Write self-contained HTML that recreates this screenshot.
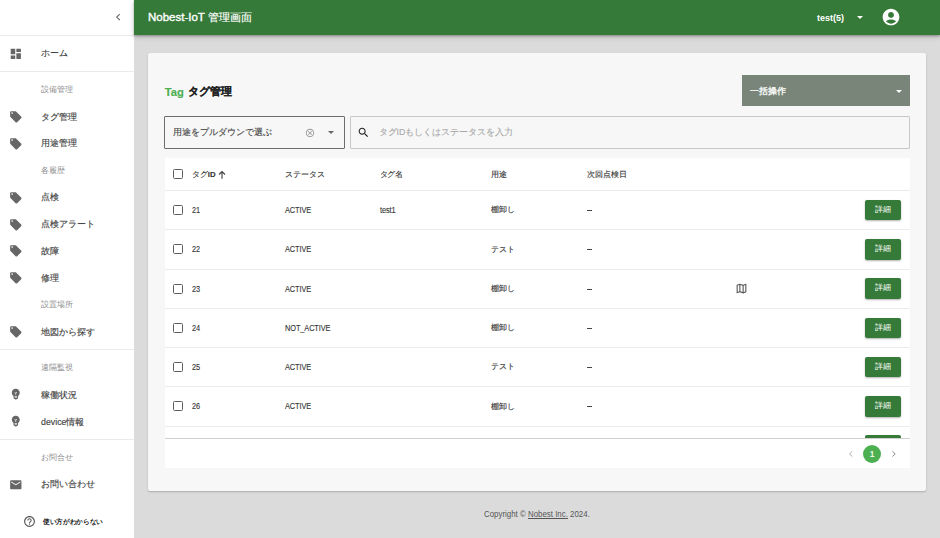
<!DOCTYPE html>
<html><head><meta charset="utf-8">
<style>
*{box-sizing:border-box;margin:0;padding:0}
html,body{width:940px;height:538px;overflow:hidden}
body{position:relative;background:#dbdbdb;font-family:"Liberation Sans",sans-serif;color:#333}
.a{position:absolute;white-space:nowrap}
#side{position:absolute;left:0;top:0;width:134px;height:538px;background:#fff}
.hr{position:absolute;left:0;width:134px;height:1px;background:#eaeaea}
.it{position:absolute;left:41px;font-size:8.8px;line-height:10px;color:#444;-webkit-text-stroke:.15px #444}
.lb{position:absolute;left:41px;font-size:7.5px;line-height:10px;color:#8c8c8c}
.ic{position:absolute;left:9px;width:13.6px;height:13.6px}
#hdr{position:absolute;left:134px;top:0;width:806px;height:35px;background:#367a39;box-shadow:0 1px 2px rgba(0,0,0,.25),0 2px 5px rgba(0,0,0,.2)}
#card{position:absolute;left:148px;top:53px;width:778px;height:437.5px;background:#f7f7f7;border-radius:2px;box-shadow:0 1px 2px rgba(0,0,0,.22)}
#tbl{position:absolute;left:165px;top:158px;width:745px;height:310px;background:#fff}
.rl{position:absolute;left:165px;width:745px;height:1px;background:#ebebeb}
.cb{position:absolute;left:173.1px;width:10.2px;height:10.2px;border:1.5px solid #5e5e5e;border-radius:1.5px}
.td{position:absolute;font-size:7.8px;line-height:10px;color:#333;letter-spacing:-.1px;-webkit-text-stroke:.12px #333}
.lat{font-size:8.4px;transform:scaleX(.88);transform-origin:0 50%}
.btn{position:absolute;left:865px;width:36px;height:20.5px;background:#367a39;border-radius:2px;box-shadow:0 1px 2px rgba(0,0,0,.3);color:#fff;font-size:7.7px;line-height:20.5px;text-align:center}
</style></head><body>
<div id="side">
<svg class="a" style="left:114px;top:12px" width="8" height="10" viewBox="0 0 8 10"><path d="M5.8 2.2 L2.7 5.1 L5.8 8" fill="none" stroke="#6a6a6a" stroke-width="1.1"/></svg>
<div class="hr" style="top:35px"></div>
<svg class="ic" style="top:46.9px" viewBox="0 0 24 24"><path fill="#666" d="M3 13h8V3H3v10zm0 8h8v-6H3v6zm10 0h8V11h-8v10zm0-18v6h8V3h-8z"/></svg>
<div class="it" style="top:48px">ホーム</div>
<div class="hr" style="top:71px"></div>
<div class="lb" style="top:85.0px">設備管理</div>
<svg class="ic" style="top:109.9px" viewBox="0 0 24 24"><path fill="#666" d="M21.41 11.58l-9-9C12.05 2.22 11.55 2 11 2H4c-1.1 0-2 .9-2 2v7c0 .55.22 1.05.59 1.42l9 9c.36.36.86.58 1.41.58.55 0 1.05-.22 1.41-.59l7-7c.37-.36.59-.86.59-1.41 0-.55-.23-1.06-.59-1.42zM5.5 7C4.67 7 4 6.33 4 5.5S4.67 4 5.5 4 7 4.67 7 5.5 6.33 7 5.5 7z"/></svg>
<div class="it" style="top:111.5px">タグ管理</div>
<svg class="ic" style="top:136.6px" viewBox="0 0 24 24"><path fill="#666" d="M21.41 11.58l-9-9C12.05 2.22 11.55 2 11 2H4c-1.1 0-2 .9-2 2v7c0 .55.22 1.05.59 1.42l9 9c.36.36.86.58 1.41.58.55 0 1.05-.22 1.41-.59l7-7c.37-.36.59-.86.59-1.41 0-.55-.23-1.06-.59-1.42zM5.5 7C4.67 7 4 6.33 4 5.5S4.67 4 5.5 4 7 4.67 7 5.5 6.33 7 5.5 7z"/></svg>
<div class="it" style="top:138.2px">用途管理</div>
<div class="lb" style="top:165.8px">各履歴</div>
<svg class="ic" style="top:190.6px" viewBox="0 0 24 24"><path fill="#666" d="M21.41 11.58l-9-9C12.05 2.22 11.55 2 11 2H4c-1.1 0-2 .9-2 2v7c0 .55.22 1.05.59 1.42l9 9c.36.36.86.58 1.41.58.55 0 1.05-.22 1.41-.59l7-7c.37-.36.59-.86.59-1.41 0-.55-.23-1.06-.59-1.42zM5.5 7C4.67 7 4 6.33 4 5.5S4.67 4 5.5 4 7 4.67 7 5.5 6.33 7 5.5 7z"/></svg>
<div class="it" style="top:192.2px">点検</div>
<svg class="ic" style="top:217.6px" viewBox="0 0 24 24"><path fill="#666" d="M21.41 11.58l-9-9C12.05 2.22 11.55 2 11 2H4c-1.1 0-2 .9-2 2v7c0 .55.22 1.05.59 1.42l9 9c.36.36.86.58 1.41.58.55 0 1.05-.22 1.41-.59l7-7c.37-.36.59-.86.59-1.41 0-.55-.23-1.06-.59-1.42zM5.5 7C4.67 7 4 6.33 4 5.5S4.67 4 5.5 4 7 4.67 7 5.5 6.33 7 5.5 7z"/></svg>
<div class="it" style="top:219.2px">点検アラート</div>
<svg class="ic" style="top:244.4px" viewBox="0 0 24 24"><path fill="#666" d="M21.41 11.58l-9-9C12.05 2.22 11.55 2 11 2H4c-1.1 0-2 .9-2 2v7c0 .55.22 1.05.59 1.42l9 9c.36.36.86.58 1.41.58.55 0 1.05-.22 1.41-.59l7-7c.37-.36.59-.86.59-1.41 0-.55-.23-1.06-.59-1.42zM5.5 7C4.67 7 4 6.33 4 5.5S4.67 4 5.5 4 7 4.67 7 5.5 6.33 7 5.5 7z"/></svg>
<div class="it" style="top:246px">故障</div>
<svg class="ic" style="top:271.4px" viewBox="0 0 24 24"><path fill="#666" d="M21.41 11.58l-9-9C12.05 2.22 11.55 2 11 2H4c-1.1 0-2 .9-2 2v7c0 .55.22 1.05.59 1.42l9 9c.36.36.86.58 1.41.58.55 0 1.05-.22 1.41-.59l7-7c.37-.36.59-.86.59-1.41 0-.55-.23-1.06-.59-1.42zM5.5 7C4.67 7 4 6.33 4 5.5S4.67 4 5.5 4 7 4.67 7 5.5 6.33 7 5.5 7z"/></svg>
<div class="it" style="top:273px">修理</div>
<div class="lb" style="top:299.7px">設置場所</div>
<svg class="ic" style="top:324.9px" viewBox="0 0 24 24"><path fill="#666" d="M21.41 11.58l-9-9C12.05 2.22 11.55 2 11 2H4c-1.1 0-2 .9-2 2v7c0 .55.22 1.05.59 1.42l9 9c.36.36.86.58 1.41.58.55 0 1.05-.22 1.41-.59l7-7c.37-.36.59-.86.59-1.41 0-.55-.23-1.06-.59-1.42zM5.5 7C4.67 7 4 6.33 4 5.5S4.67 4 5.5 4 7 4.67 7 5.5 6.33 7 5.5 7z"/></svg>
<div class="it" style="top:326.5px">地図から探す</div>
<div class="hr" style="top:349px"></div>
<div class="lb" style="top:362.5px">遠隔監視</div>
<svg class="ic" style="top:387.09999999999997px" viewBox="0 0 24 24"><path fill="#666" d="M12 3c-.46 0-.93.04-1.4.14-2.76.53-4.96 2.76-5.48 5.52-.48 2.61.48 5.01 2.22 6.56.43.38.66.91.66 1.47V19c0 1.1.9 2 2 2h.28c.35.6.98 1 1.72 1s1.38-.4 1.72-1H14c1.1 0 2-.9 2-2v-2.31c0-.55.22-1.09.64-1.46C18.09 13.95 19 12.08 19 10c0-3.87-3.13-7-7-7zm2 16h-4v-1h4v1zm0-2h-4v-1h4v1zm-1.5-5.59V14h-1v-2.59L9.67 9.590l.71-.71L12 10.5l1.62-1.62.71.71-1.83 1.82z"/></svg>
<div class="it" style="top:389.7px">稼働状況</div>
<svg class="ic" style="top:413.9px" viewBox="0 0 24 24"><path fill="#666" d="M12 3c-.46 0-.93.04-1.4.14-2.76.53-4.96 2.76-5.48 5.52-.48 2.61.48 5.01 2.22 6.56.43.38.66.91.66 1.47V19c0 1.1.9 2 2 2h.28c.35.6.98 1 1.72 1s1.38-.4 1.72-1H14c1.1 0 2-.9 2-2v-2.31c0-.55.22-1.09.64-1.46C18.09 13.95 19 12.08 19 10c0-3.87-3.13-7-7-7zm2 16h-4v-1h4v1zm0-2h-4v-1h4v1zm-1.5-5.59V14h-1v-2.59L9.67 9.590l.71-.71L12 10.5l1.62-1.62.71.71-1.83 1.82z"/></svg>
<div class="it" style="top:416.5px">device情報</div>
<div class="hr" style="top:439px"></div>
<div class="lb" style="top:452.5px">お問合せ</div>
<svg class="ic" style="top:477.7px" viewBox="0 0 24 24"><path fill="#666" d="M20 4H4c-1.1 0-1.99.9-1.99 2L2 18c0 1.1.9 2 2 2h16c1.1 0 2-.9 2-2V6c0-1.1-.9-2-2-2zm0 4l-8 5-8-5V6l8 5 8-5v2z"/></svg>
<div class="it" style="top:479.3px">お問い合わせ</div>
<svg class="a" style="left:23px;top:515px" width="13" height="13" viewBox="0 0 24 24"><path fill="#555" d="M11 18h2v-2h-2v2zm1-16C6.48 2 2 6.480 2 12s4.48 10 10 10 10-4.48 10-10S17.52 2 12 2zm0 18c-4.41 0-8-3.59-8-8s3.59-8 8-8 8 3.59 8 8-3.59 8-8 8zm0-14c-2.210 0-4 1.79-4 4h2c0-1.1.9-2 2-2s2 .9 2 2c0 2-3 1.75-3 5h2c0-2.25 3-2.5 3-5 0-2.21-1.79-4-4-4z"/></svg>
<div class="a" style="left:42.5px;top:516.7px;font-size:6.8px;transform:scaleX(.95);transform-origin:0 50%;line-height:10px;font-weight:bold;color:#222">使い方がわからない</div>
</div>
<div id="hdr">
<div class="a" style="left:14px;top:11.3px;font-size:11.5px;line-height:13px;color:#fff"><span style="-webkit-text-stroke:.35px #fff">Nobest-IoT</span> <span style="font-size:11px;-webkit-text-stroke:.15px #fff">管理画面</span></div>
<div class="a" style="left:683px;top:12.5px;font-size:9px;line-height:11px;color:#fff;font-weight:bold">test(5)</div>
<svg class="a" style="left:722.5px;top:16px" width="6" height="3" viewBox="0 0 6 3"><path d="M0 0h6L3 3z" fill="#fff"/></svg>
<svg class="a" style="left:747px;top:7.3px" width="20" height="20" viewBox="0 0 24 24"><path fill="#fff" d="M12 2C6.48 2 2 6.48 2 12s4.48 10 10 10 10-4.48 10-10S17.52 2 12 2zm0 4c1.93 0 3.5 1.57 3.5 3.5S13.93 13 12 13s-3.5-1.57-3.5-3.5S10.07 6 12 6zm0 14c-2.03 0-4.43-.82-6.14-2.88C7.55 15.8 9.68 15 12 15s4.45.8 6.14 2.12C16.43 19.18 14.03 20 12 20z"/></svg>
</div>
<div id="card"></div>
<div class="a" style="left:164.7px;top:84.6px;font-size:11.2px;line-height:14px;font-weight:bold;color:#4caf50;-webkit-text-stroke:.15px #4caf50">Tag</div>
<div class="a" style="left:187.7px;top:84px;font-size:11px;line-height:14px;font-weight:bold;color:#222;-webkit-text-stroke:.1px #222">タグ管理</div>
<div class="a" style="left:742px;top:75px;width:168px;height:31px;background:#788578"></div>
<div class="a" style="left:750px;top:86.3px;font-size:8.7px;line-height:10px;color:#fff;-webkit-text-stroke:.3px #fff">一括操作</div>
<svg class="a" style="left:896px;top:90px" width="6" height="3" viewBox="0 0 6 3"><path d="M0 0h6L3 3z" fill="#fff"/></svg>
<div class="a" style="left:164px;top:116px;width:180.7px;height:32.5px;border:1.3px solid #6c6c6c;border-radius:1px"></div>
<div class="a" style="left:173px;top:126.6px;font-size:8.8px;line-height:10px;color:#4a4a4a;-webkit-text-stroke:.15px #4a4a4a">用途をプルダウンで選ぶ</div>
<svg class="a" style="left:304.5px;top:127.5px" width="10" height="10" viewBox="0 0 24 24"><path fill="#999" d="M12 2C6.47 2 2 6.47 2 12s4.47 10 10 10 10-4.47 10-10S17.53 2 12 2zm0 18c-4.41 0-8-3.59-8-8s3.59-8 8-8 8 3.59 8 8-3.59 8-8 8zm3.59-13L12 10.590 8.41 7 7 8.41 10.59 12 7 15.59 8.41 17 12 13.41 15.59 17 17 15.59 13.41 12 17 8.41z"/></svg>
<svg class="a" style="left:327.5px;top:130.8px" width="6" height="3" viewBox="0 0 6 3"><path d="M0 0h6L3 3z" fill="#666"/></svg>
<div class="a" style="left:350px;top:115.5px;width:560px;height:33.5px;border:1.2px solid #c8c8c8;border-radius:1px"></div>
<svg class="a" style="left:357px;top:125.6px" width="13" height="13" viewBox="0 0 24 24"><path fill="#222" d="M15.5 14h-.79l-.28-.27C15.41 12.59 16 11.11 16 9.5 16 5.91 13.09 3 9.5 3S3 5.91 3 9.5 5.91 16 9.5 16c1.61 0 3.09-.59 4.23-1.57l.27.28v.79l5 4.99L20.49 19l-4.99-5zm-6 0C7.01 14 5 11.99 5 9.5S7.01 5 9.5 5 14 7.01 14 9.5 11.99 14 9.5 14z"/></svg>
<div class="a" style="left:378.5px;top:126.6px;font-size:8.8px;line-height:10px;color:#a8a8a8;-webkit-text-stroke:.1px #a8a8a8">タグIDもしくはステータスを入力</div>
<div id="tbl"></div>
<div class="rl" style="top:190px"></div>
<div class="cb" style="top:168.7px"></div>
<div class="td" style="left:192px;top:169.8px">タグ<b>ID</b></div>
<svg class="a" style="left:218px;top:170px" width="8" height="9" viewBox="0 0 8 9"><path d="M4 8.8V1.5M1 4.5L4 1.5 7 4.5" fill="none" stroke="#444" stroke-width="1.15"/></svg>
<div class="td" style="left:285px;top:169.8px">ステータス</div>
<div class="td" style="left:379.5px;top:169.8px">タグ名</div>
<div class="td" style="left:491px;top:169.8px">用途</div>
<div class="td" style="left:587px;top:169.8px">次回点検日</div>
<div class="rl" style="top:229.3px"></div>
<div class="cb" style="top:204.9px"></div>
<div class="td lat" style="left:192px;top:205.0px">21</div>
<div class="td lat" style="left:285px;top:205.0px">ACTIVE</div>
<div class="td lat" style="left:379.5px;top:205.0px">test1</div>
<div class="td" style="left:491px;top:205.3px">棚卸し</div>
<div class="a" style="left:587px;top:210.0px;width:5.3px;height:0.9px;background:#444"></div>
<div class="btn" style="top:199.8px">詳細</div>
<div class="rl" style="top:268.5px"></div>
<div class="cb" style="top:244.2px"></div>
<div class="td lat" style="left:192px;top:244.3px">22</div>
<div class="td lat" style="left:285px;top:244.3px">ACTIVE</div>
<div class="td" style="left:491px;top:244.6px">テスト</div>
<div class="a" style="left:587px;top:249.3px;width:5.3px;height:0.9px;background:#444"></div>
<div class="btn" style="top:239.1px">詳細</div>
<div class="rl" style="top:307.8px"></div>
<div class="cb" style="top:283.5px"></div>
<div class="td lat" style="left:192px;top:283.6px">23</div>
<div class="td lat" style="left:285px;top:283.6px">ACTIVE</div>
<div class="td" style="left:491px;top:283.9px">棚卸し</div>
<div class="a" style="left:587px;top:288.6px;width:5.3px;height:0.9px;background:#444"></div>
<div class="btn" style="top:278.4px">詳細</div>
<div class="rl" style="top:347.1px"></div>
<div class="cb" style="top:322.7px"></div>
<div class="td lat" style="left:192px;top:322.8px">24</div>
<div class="td lat" style="left:285px;top:322.8px">NOT_ACTIVE</div>
<div class="td" style="left:491px;top:323.1px">棚卸し</div>
<div class="a" style="left:587px;top:327.8px;width:5.3px;height:0.9px;background:#444"></div>
<div class="btn" style="top:317.6px">詳細</div>
<div class="rl" style="top:386.4px"></div>
<div class="cb" style="top:362.0px"></div>
<div class="td lat" style="left:192px;top:362.1px">25</div>
<div class="td lat" style="left:285px;top:362.1px">ACTIVE</div>
<div class="td" style="left:491px;top:362.4px">テスト</div>
<div class="a" style="left:587px;top:367.1px;width:5.3px;height:0.9px;background:#444"></div>
<div class="btn" style="top:356.9px">詳細</div>
<div class="rl" style="top:425.6px"></div>
<div class="cb" style="top:401.3px"></div>
<div class="td lat" style="left:192px;top:401.4px">26</div>
<div class="td lat" style="left:285px;top:401.4px">ACTIVE</div>
<div class="td" style="left:491px;top:401.7px">棚卸し</div>
<div class="a" style="left:587px;top:406.4px;width:5.3px;height:0.9px;background:#444"></div>
<div class="btn" style="top:396.2px">詳細</div>
<div class="a" style="left:865px;top:434.5px;width:36px;height:3.5px;overflow:hidden"><div class="btn" style="left:0;top:0"></div></div>
<svg class="a" style="left:735px;top:281.7px" width="13" height="13" viewBox="0 0 24 24"><path fill="#555" d="M20.5 3l-.16.03L15 5.1 9 3 3.36 4.9c-.21.07-.36.25-.36.48V20.5c0 .28.22.5.5.5l.16-.03L9 18.9l6 2.1 5.64-1.9c.21-.07.36-.25.36-.48V3.5c0-.28-.22-.5-.5-.5zM10 5.47l4 1.4v11.66l-4-1.4V5.47zm-5 .99l3-1.01v11.7l-3 1.16V6.46zm14 11.08l-3 1.01V6.86l3-1.16v11.84z"/></svg>
<div class="a" style="left:165px;top:438px;width:745px;height:1px;background:#d0d0d0"></div>
<svg class="a" style="left:848px;top:450px" width="6" height="8" viewBox="0 0 6 8"><path d="M4.3 1.3 L1.6 3.9 L4.3 6.5" fill="none" stroke="#aaa" stroke-width="1"/></svg>
<div class="a" style="left:863.1px;top:444.7px;width:18px;height:18px;border-radius:50%;background:#4caf50;color:#fff;font-size:8.6px;line-height:18px;text-align:center;-webkit-text-stroke:.2px #fff">1</div>
<svg class="a" style="left:890.5px;top:450px" width="6" height="8" viewBox="0 0 6 8"><path d="M1.5 1.3 L4.2 3.9 L1.5 6.5" fill="none" stroke="#888" stroke-width="1"/></svg>
<div class="a" style="left:483.7px;top:508.9px;font-size:8.8px;line-height:10px;color:#555;transform:scaleX(.897);transform-origin:0 50%">Copyright © <span style="text-decoration:underline">Nobest Inc.</span> 2024.</div>
</body></html>
